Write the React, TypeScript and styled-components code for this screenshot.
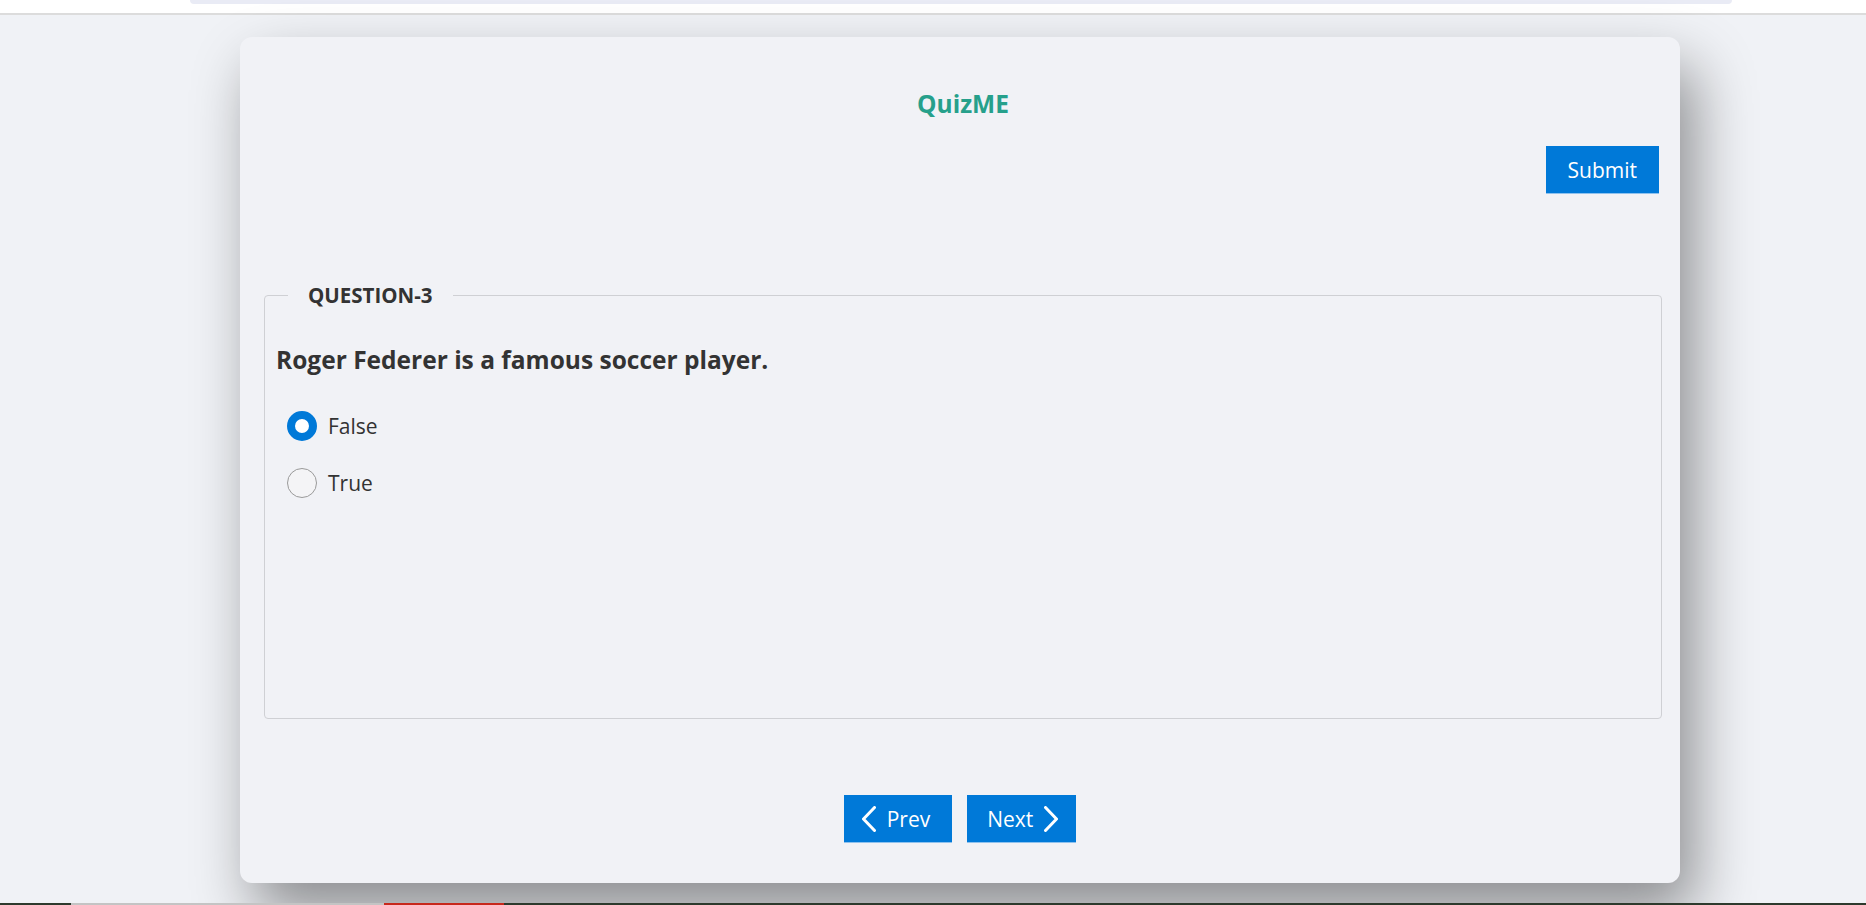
import React, { useState } from "react";
import styled, { createGlobalStyle } from "styled-components";

const Global = createGlobalStyle`
  html, body { margin: 0; padding: 0; height: 100%; }
  body {
    background: #f0f2f6;
    font-family: "Open Sans", "Noto Sans", sans-serif;
    color: #333;
    overflow: hidden;
  }
  #root { height: 100%; }
`;

const Page = styled.div`
  height: 905px;
  display: flex;
  flex-direction: column;
`;

const BrowserTop = styled.div`
  height: 13px;
  background: #ffffff;
  border-bottom: 2px solid #dcdcdc;
  display: flex;
  justify-content: flex-start;
  padding-left: 190px;
`;

const Pill = styled.div`
  width: 1542px;
  height: 4px;
  background: #e9ebf5;
  border-radius: 0 0 8px 8px;
`;

const Main = styled.main`
  flex: 1;
  display: flex;
  justify-content: flex-start;
  align-items: flex-start;
  padding: 22px 0 0 240px;
`;

const Card = styled.section`
  width: 1440px;
  height: 846px;
  box-sizing: border-box;
  background: #f1f2f6;
  border-radius: 12px;
  box-shadow: 14px 30px 60px rgba(0, 0, 0, 0.42);
  padding: 0 18px 0 24px;
  display: flex;
  flex-direction: column;
`;

const Title = styled.h1`
  margin: 51px 0 0;
  text-align: center;
  font-size: 24.5px;
  font-weight: 700;
  line-height: 32px;
  color: #26a08b;
`;

const Toolbar = styled.div`
  display: flex;
  justify-content: flex-end;
  margin-top: 26px;
  padding-right: 3px;
`;

const Button = styled.button<{ $l?: number; $r?: number }>`
  display: inline-flex;
  align-items: center;
  justify-content: center;
  gap: 11px;
  height: 48px;
  padding: 0 ${(p) => p.$r ?? 22}px 0 ${(p) => p.$l ?? 22}px;
  border: none;
  border-radius: 0;
  background: #0079d8;
  box-shadow: inset 0 -1px 0 #8fc2ee;
  color: #ffffff;
  font-family: "Open Sans", "Noto Sans", sans-serif;
  font-size: 21px;
  cursor: pointer;
`;

const Fieldset = styled.fieldset`
  margin: 87px 0 0;
  padding: 0 11px;
  height: 438px;
  box-sizing: border-box;
  border: 1px solid #cfd0d4;
  border-radius: 4px;
`;

const Legend = styled.legend`
  margin-left: 12px;
  padding: 0 20px;
  font-size: 20.5px;
  font-weight: 700;
  color: #333;
`;

const Question = styled.p`
  margin: 34px 0 0;
  font-size: 24.5px;
  font-weight: 700;
  color: #333;
  line-height: 34px;
`;

const Options = styled.div`
  display: flex;
  flex-direction: column;
  gap: 27px;
  margin-top: 34px;
  padding-left: 11px;
`;

const Option = styled.label`
  display: flex;
  align-items: center;
  gap: 11px;
  height: 30px;
  font-size: 21px;
  color: #333;
  cursor: pointer;
`;

const Radio = styled.span<{ $on: boolean }>`
  width: 30px;
  height: 30px;
  box-sizing: border-box;
  border-radius: 50%;
  background: ${(p) => (p.$on ? "#ffffff" : "#f4f4f6")};
  border: ${(p) => (p.$on ? "8px solid #0079d8" : "1px solid #9a9a9a")};
`;

const Nav = styled.div`
  display: flex;
  justify-content: center;
  gap: 15px;
  margin-top: 76px;
  padding-right: 6px;
`;

const BottomStrip = styled.div`
  height: 2px;
  display: flex;
`;

const Seg = styled.div<{ $w: number; $c: string }>`
  width: ${(p) => p.$w}px;
  background: ${(p) => p.$c};
`;

const Chevron = ({ dir }: { dir: "l" | "r" }) => (
  <svg width="14" height="26" viewBox="0 0 14 26" fill="none">
    <path
      d={dir === "l" ? "M12.5 1.5 L1.5 13 L12.5 24.5" : "M1.5 1.5 L12.5 13 L1.5 24.5"}
      stroke="#fff"
      strokeWidth="3"
      strokeLinecap="round"
      strokeLinejoin="round"
    />
  </svg>
);

export default function App() {
  const [answer, setAnswer] = useState("False");
  return (
    <Page>
      <Global />
      <BrowserTop>
        <Pill />
      </BrowserTop>
      <Main>
        <Card>
          <Title>QuizME</Title>
          <Toolbar>
            <Button>Submit</Button>
          </Toolbar>
          <Fieldset>
            <Legend>QUESTION-3</Legend>
            <Question>Roger Federer is a famous soccer player.</Question>
            <Options>
              {["False", "True"].map((o) => (
                <Option key={o} onClick={() => setAnswer(o)}>
                  <Radio $on={answer === o} />
                  {o}
                </Option>
              ))}
            </Options>
          </Fieldset>
          <Nav>
            <Button $l={18} $r={22}>
              <Chevron dir="l" />
              Prev
            </Button>
            <Button $l={20} $r={18}>
              Next
              <Chevron dir="r" />
            </Button>
          </Nav>
        </Card>
      </Main>
      <BottomStrip>
        <Seg $w={71} $c="#2d3a2d" />
        <Seg $w={313} $c="#c4c4c4" />
        <Seg $w={120} $c="#c8281c" />
        <Seg $w={1362} $c="#2d3a2d" />
      </BottomStrip>
    </Page>
  );
}
